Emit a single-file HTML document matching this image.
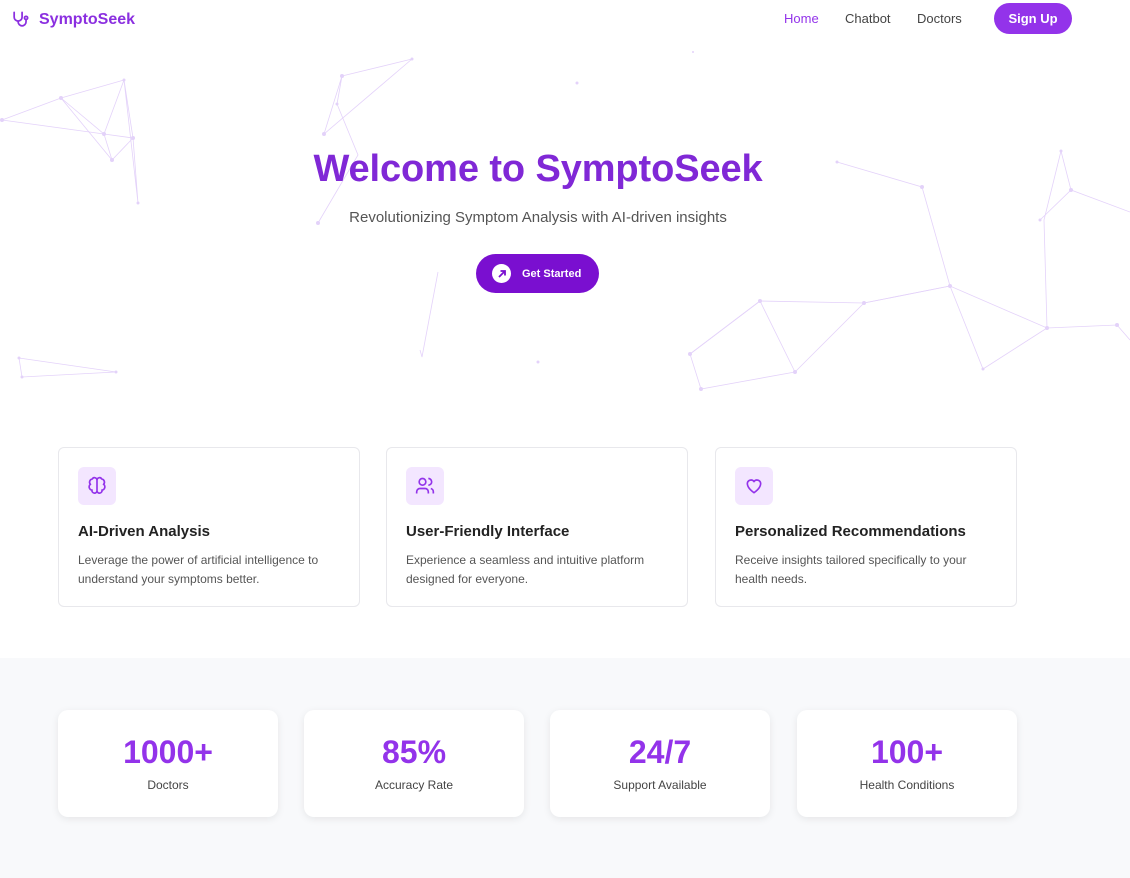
<!DOCTYPE html>
<html><head><style>
*{box-sizing:border-box;margin:0;padding:0}
body{width:1130px;height:878px;overflow:hidden;background:#fff;font-family:"Liberation Sans",sans-serif;position:relative}
.nav{position:absolute;top:0;left:0;width:1130px;height:38px}
.logo{position:absolute;left:11px;top:10px;color:#8b2fe0;font-size:16px;font-weight:bold;display:flex;align-items:center;gap:9px}
.links a{position:absolute;top:11px;font-size:13px;color:#444;text-decoration:none}
.btn{position:absolute;left:994px;top:3px;width:78px;height:31px;border-radius:16px;background:#9333ea;color:#fff;font-size:13px;font-weight:bold;text-align:center;line-height:31px}
h1{position:absolute;top:148px;left:0;width:1076px;text-align:center;font-size:38px;color:#8028d6;font-weight:bold;letter-spacing:-0.1px}
.sub{position:absolute;top:209px;left:0;width:1076px;text-align:center;font-size:15px;color:#555}
.gs{position:absolute;left:476px;top:254px;width:123px;height:39px;border-radius:20px;background:#7a0fd0;color:#fff;font-size:11px;font-weight:bold;display:flex;align-items:center;padding-left:16px;gap:11px}
.gs i{width:19px;height:19px;border-radius:50%;background:#fff;display:flex;align-items:center;justify-content:center}
.card{position:absolute;top:447px;width:302px;height:160px;border:1px solid #e8e8ec;border-radius:6px;padding:19px}
.ic{width:38px;height:38px;border-radius:6px;background:#f3e6ff;display:flex;align-items:center;justify-content:center}
.card h3{font-size:15px;color:#222;margin-top:18px;font-weight:bold}
.card p{font-size:12px;color:#555;line-height:19px;margin-top:11px}
.stats{position:absolute;top:658px;left:0;width:1130px;height:220px;background:#f8f9fb}
.st{position:absolute;top:52px;width:220px;height:107px;background:#fff;border-radius:10px;box-shadow:0 2px 8px rgba(0,0,0,.08);text-align:center}
.st b{display:block;font-size:32px;color:#9333ea;margin-top:24px}
.st span{display:block;font-size:12px;color:#444;margin-top:7px}
</style></head><body>
<svg width="1130" height="420" style="position:absolute;top:0;left:0" stroke="#c9a6f5" stroke-width="0.8" fill="#c9a6f5">
<g opacity=".5">
<polyline fill="none" points="2,120 61,98 124,80 133,138 112,160 61,98 104,134 133,138 138,203 124,80 104,134 112,160"/>
<polyline fill="none" points="2,120 104,134"/>
<polyline fill="none" points="342,76 412,59 324,134 342,76 337,104 358,155 318,223"/>
<polyline fill="none" points="438,272 422,357 420,350"/>
<polyline fill="none" points="19,358 116,372 22,377 19,358"/>
<polyline fill="none" points="837,162 922,187 950,286 864,303 795,372 760,301 690,354 701,389 795,372"/>
<polyline fill="none" points="760,301 864,303 950,286 1047,328 1117,325 1130,340"/>
<polyline fill="none" points="950,286 983,369 1047,328 1044,220 1061,151 1071,190 1040,220 1071,190 1130,212"/>
<polyline fill="none" points="690,354 760,301"/>
<g stroke="none"><circle cx="2" cy="120" r="2"/><circle cx="61" cy="98" r="2"/><circle cx="124" cy="80" r="1.5"/><circle cx="133" cy="138" r="2"/><circle cx="112" cy="160" r="2"/><circle cx="104" cy="134" r="2"/><circle cx="138" cy="203" r="1.5"/><circle cx="342" cy="76" r="2"/><circle cx="412" cy="59" r="1.5"/><circle cx="324" cy="134" r="2"/><circle cx="337" cy="104" r="1.5"/><circle cx="318" cy="223" r="2"/><circle cx="577" cy="83" r="1.5"/><circle cx="538" cy="362" r="1.5"/><circle cx="693" cy="52" r="1"/><circle cx="837" cy="162" r="1.5"/><circle cx="922" cy="187" r="2"/><circle cx="950" cy="286" r="2"/><circle cx="864" cy="303" r="2"/><circle cx="795" cy="372" r="2"/><circle cx="760" cy="301" r="2"/><circle cx="690" cy="354" r="2"/><circle cx="701" cy="389" r="2"/><circle cx="1047" cy="328" r="2"/><circle cx="1117" cy="325" r="2"/><circle cx="1061" cy="151" r="1.5"/><circle cx="1071" cy="190" r="2"/><circle cx="1040" cy="220" r="1.5"/><circle cx="983" cy="369" r="1.5"/><circle cx="19" cy="358" r="1.5"/><circle cx="22" cy="377" r="1.5"/><circle cx="116" cy="372" r="1.5"/></g>
</g></svg>
<div class="nav">
<div class="logo"><svg width="19" height="19" viewBox="0 0 24 24" fill="none" stroke="#8b2fe0" stroke-width="2.2" stroke-linecap="round"><path d="M4 3v6a5 5 0 0 0 10 0V3"/><path d="M9 14v1a5 5 0 0 0 10 0v-3"/><circle cx="19" cy="10" r="2"/></svg>SymptoSeek</div>
<div class="links"><a style="left:784px;color:#9333ea">Home</a><a style="left:845px">Chatbot</a><a style="left:917px">Doctors</a></div>
<div class="btn">Sign Up</div>
</div>
<h1>Welcome to SymptoSeek</h1>
<div class="sub">Revolutionizing Symptom Analysis with AI-driven insights</div>
<div class="gs"><i><svg width="10" height="10" viewBox="0 0 10 10" stroke="#7a0fd0" stroke-width="1.8" fill="none"><path d="M2 8L8 2M3.5 2H8V6.5"/></svg></i>Get Started</div>
<div class="card" style="left:58px"><div class="ic"><svg width="20" height="20" viewBox="0 0 24 24" fill="none" stroke="#9333ea" stroke-width="2"><path d="M12 5a3 3 0 0 0-5.6-1.5A4 4 0 0 0 4 10a4 4 0 0 0 2 7 3 3 0 0 0 6 1V5zM12 5a3 3 0 0 1 5.6-1.5A4 4 0 0 1 20 10a4 4 0 0 1-2 7 3 3 0 0 1-6 1"/></svg></div><h3>AI-Driven Analysis</h3><p>Leverage the power of artificial intelligence to understand your symptoms better.</p></div>
<div class="card" style="left:386px"><div class="ic"><svg width="20" height="20" viewBox="0 0 24 24" fill="none" stroke="#9333ea" stroke-width="2"><circle cx="9" cy="7" r="4"/><path d="M2 21v-2a4 4 0 0 1 4-4h6a4 4 0 0 1 4 4v2M16 3a4 4 0 0 1 0 8M22 21v-2a4 4 0 0 0-3-4"/></svg></div><h3>User-Friendly Interface</h3><p>Experience a seamless and intuitive platform designed for everyone.</p></div>
<div class="card" style="left:715px"><div class="ic"><svg width="20" height="20" viewBox="0 0 24 24" fill="none" stroke="#9333ea" stroke-width="2"><path d="M12 20s-8-5-8-11a4.5 4.5 0 0 1 8-2.5A4.5 4.5 0 0 1 20 9c0 6-8 11-8 11z"/></svg></div><h3>Personalized Recommendations</h3><p>Receive insights tailored specifically to your health needs.</p></div>
<div class="stats">
<div class="st" style="left:58px"><b>1000+</b><span>Doctors</span></div>
<div class="st" style="left:304px"><b>85%</b><span>Accuracy Rate</span></div>
<div class="st" style="left:550px"><b>24/7</b><span>Support Available</span></div>
<div class="st" style="left:797px"><b>100+</b><span>Health Conditions</span></div>
</div>
</body></html>
